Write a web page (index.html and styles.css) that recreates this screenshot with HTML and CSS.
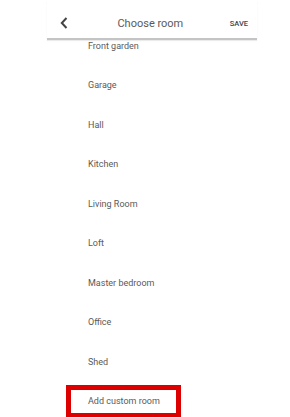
FILE: index.html
```html
<!DOCTYPE html>
<html>
<head>
<meta charset="utf-8">
<link rel="stylesheet" href="styles.css">
</head>
<body>
<div class="screen">
  <header class="topbar">
    <span class="back">
      <svg width="8" height="12" viewBox="0 0 8 12"><path d="M6.5 1 L1.8 6 L6.5 11" fill="none" stroke="#444" stroke-width="2"/></svg>
    </span>
    <span class="title">Choose room</span>
    <span class="save">SAVE</span>
  </header>
  <ul class="rooms">
    <li class="room">Front garden</li>
    <li class="room">Garage</li>
    <li class="room">Hall</li>
    <li class="room">Kitchen</li>
    <li class="room">Living Room</li>
    <li class="room">Loft</li>
    <li class="room">Master bedroom</li>
    <li class="room">Office</li>
    <li class="room">Shed</li>
    <li class="room"><span class="custom">Add custom room</span></li>
  </ul>
</div>
</body>
</html>
```

FILE: styles.css
```css
html, body {
  margin: 0;
  padding: 0;
  background: #ffffff;
}
body {
  font-family: Roboto, "Liberation Sans", sans-serif;
  overflow: hidden;
}
.screen {
  width: 290px;
  height: 417px;
  overflow: hidden;
}
.topbar {
  position: relative;
  z-index: 1;
  background: #ffffff;
  margin-left: 47px;
  width: 210px;
  height: 40px;
  box-sizing: border-box;
  border-bottom: 2px solid #c4c4c4;
  box-shadow: 0 1px 1px rgba(0,0,0,0.08);
  display: flex;
  align-items: center;
  justify-content: space-between;
  padding: 0 9px 0 13px;
}
.back {
  display: flex;
  width: 8px;
  height: 12px;
  margin-top: 8px;
}
.title {
  font-size: 11px;
  color: #5a5a5a;
  margin-top: 8px;
  margin-left: 3px;
}
.save {
  font-size: 7.5px;
  font-weight: 500;
  color: #444;
  margin-top: 8px;
}
.rooms {
  list-style: none;
  margin: -14px 0 0 0;
  padding: 0 0 0 88px;
}
.room {
  height: 39.5px;
  display: flex;
  align-items: center;
  font-size: 9px;
  color: #5a5a5a;
}
.custom {
  margin-left: -22px;
  width: 115px;
  height: 33px;
  box-sizing: border-box;
  border: 5px solid #dd0000;
  padding-left: 17px;
  display: flex;
  align-items: center;
}
```
